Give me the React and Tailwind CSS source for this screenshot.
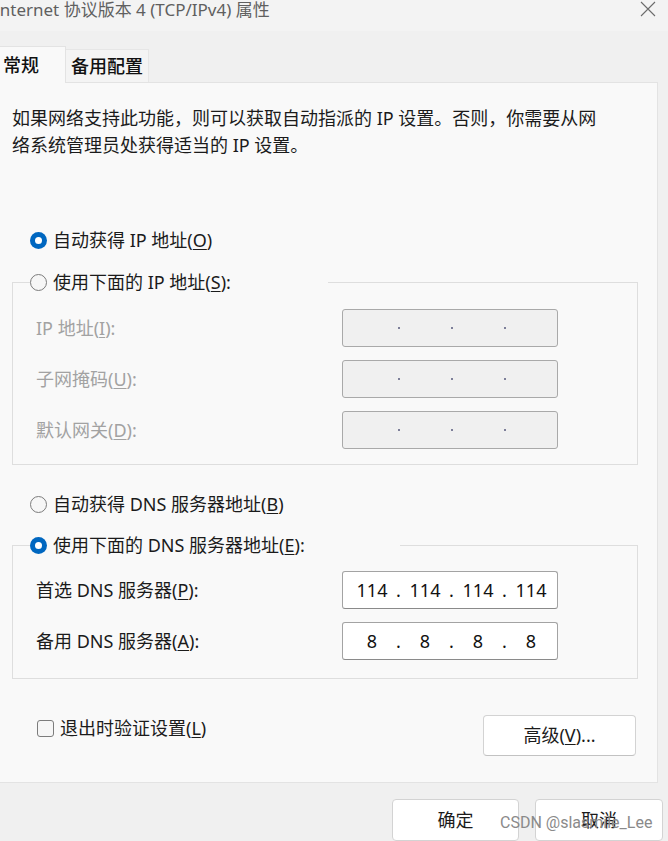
import React from 'react';

const font = "font-['Noto_Sans','Noto_Sans_CJK_SC',sans-serif]";

function Radio({ checked }) {
  if (checked) {
    return (
      <span className="flex h-[17px] w-[17px] shrink-0 items-center justify-center rounded-full bg-[#0067c0]">
        <span className="h-[7px] w-[7px] rounded-full bg-white" />
      </span>
    );
  }
  return <span className="h-[17px] w-[17px] shrink-0 rounded-full border border-[#7c7c7c] bg-[#f6f6f6]" />;
}

function RadioRow({ checked, children }) {
  return (
    <div className="flex h-6 items-center gap-[6px]">
      <Radio checked={checked} />
      <span className="text-[18px] leading-6 text-[#1b1b1b]">{children}</span>
    </div>
  );
}

function IpBox({ parts, disabled }) {
  return (
    <div
      className={
        disabled
          ? 'flex h-[38px] w-[216px] items-center rounded-[3px] border border-[#a9a9a9] bg-[#f0f0f0] pl-[9px]'
          : 'flex h-[38px] w-[216px] items-center rounded-[3px] border border-[#a3a3a3] border-b-[#8a8a8a] bg-white pl-[9px] text-[18px] text-[#111]'
      }
    >
      {parts.map((p, i) => (
        <React.Fragment key={i}>
          {i > 0 &&
            (disabled ? (
              <span className="flex w-[13px] justify-center">
                <span className="h-[2px] w-[2px] bg-[#7d7f99]" />
              </span>
            ) : (
              <span className="w-[13px] text-center">.</span>
            ))}
          <span className="w-10 text-center">{p}</span>
        </React.Fragment>
      ))}
    </div>
  );
}

function FieldRow({ label, parts, disabled }) {
  return (
    <div className="flex h-[38px] items-center pl-[23px]">
      <span className={`w-[306px] text-[18px] ${disabled ? 'text-[#a2a2a2]' : 'text-[#1b1b1b]'}`}>{label}</span>
      <IpBox parts={parts} disabled={disabled} />
    </div>
  );
}

export default function App() {
  return (
    <div className={`relative h-[841px] w-[668px] overflow-hidden bg-[#f0f0f0] ${font}`}>
      {/* title bar */}
      <div className="flex h-[31px] items-start justify-between bg-[#f3f3f3]">
        <span className="-ml-[6px] text-[17px] leading-[20px] text-[#5f5f5f]">Internet 协议版本 4 (TCP/IPv4) 属性</span>
        <svg className="mr-[12px] mt-[1px]" width="16" height="16" viewBox="0 0 16 16">
          <path d="M1 1 L15 15 M15 1 L1 15" stroke="#6b6b6b" strokeWidth="1.1" fill="none" />
        </svg>
      </div>

      {/* tabs */}
      <div className="mt-[15px] flex items-end">
        <div className="relative z-10 -mb-px flex h-[37px] w-[66px] items-center border-r border-t border-[#e3e3e3] bg-[#f9f9f9] pl-[3px]">
          <span className="text-[18px] font-medium text-[#111]">常规</span>
        </div>
        <div className="flex h-[33px] w-[83px] items-center justify-center border-r border-t border-[#e6e6e6] bg-[#f4f4f4]">
          <span className="text-[18px] font-medium text-[#111]">备用配置</span>
        </div>
      </div>

      {/* panel */}
      <div className="w-[658px] border-y border-r border-[#e3e3e3] bg-[#f9f9f9] pt-[22px]">
        <p className="pl-[12px] text-[18px] leading-[27px] text-[#1b1b1b]">
          如果网络支持此功能，则可以获取自动指派的 IP 设置。否则，你需要从网
          <br />
          络系统管理员处获得适当的 IP 设置。
        </p>

        <div className="mt-[69px] pl-[30px]">
          <RadioRow checked>
            自动获得 IP 地址(<u className="underline-offset-2">O</u>)
          </RadioRow>
        </div>

        <fieldset className="ml-[12px] mt-[18px] w-[626px] border border-[#dedede] pb-[15px]">
          <legend className="ml-[17px] w-[298px]">
            <RadioRow>
              使用下面的 IP 地址(<u className="underline-offset-2">S</u>):
            </RadioRow>
          </legend>
          <div className="mt-[15px] flex flex-col gap-[13px]">
            <FieldRow disabled parts={['', '', '', '']} label={<>IP 地址(<u className="underline-offset-2">I</u>):</>} />
            <FieldRow disabled parts={['', '', '', '']} label={<>子网掩码(<u className="underline-offset-2">U</u>):</>} />
            <FieldRow disabled parts={['', '', '', '']} label={<>默认网关(<u className="underline-offset-2">D</u>):</>} />
          </div>
        </fieldset>

        <div className="mt-[27px] pl-[30px]">
          <RadioRow>
            自动获得 DNS 服务器地址(<u className="underline-offset-2">B</u>)
          </RadioRow>
        </div>

        <fieldset className="ml-[12px] mt-[17px] w-[626px] border border-[#dedede] pb-[18px]">
          <legend className="ml-[17px] w-[370px]">
            <RadioRow checked>
              使用下面的 DNS 服务器地址(<u className="underline-offset-2">E</u>):
            </RadioRow>
          </legend>
          <div className="mt-[14px] flex flex-col gap-[13px]">
            <FieldRow parts={['114', '114', '114', '114']} label={<>首选 DNS 服务器(<u className="underline-offset-2">P</u>):</>} />
            <FieldRow parts={['8', '8', '8', '8']} label={<>备用 DNS 服务器(<u className="underline-offset-2">A</u>):</>} />
          </div>
        </fieldset>

        <div className="mt-[36px] flex items-start justify-between pb-[26px] pl-[37px] pr-[21px]">
          <div className="mt-[1px] flex h-6 items-center gap-[6px]">
            <span className="h-[17px] w-[17px] rounded-[3px] border border-[#7c7c7c] bg-[#f6f6f6]" />
            <span className="text-[18px] text-[#1b1b1b]">
              退出时验证设置(<u className="underline-offset-2">L</u>)
            </span>
          </div>
          <button className="h-[41px] w-[153px] rounded-[4px] border border-[#d3d3d3] border-b-[#c2c2c2] bg-white text-[18px] text-[#1b1b1b]">
            高级(<u className="underline-offset-2">V</u>)...
          </button>
        </div>
      </div>

      {/* dialog buttons */}
      <div className="mt-[16px] flex gap-[16px] pl-[392px]">
        <button className="h-[42px] w-[127px] rounded-[4px] border border-[#d3d3d3] bg-white text-[18px] text-[#1b1b1b]">确定</button>
        <button className="h-[42px] w-[128px] rounded-[4px] border border-[#d3d3d3] bg-white text-[18px] text-[#1b1b1b]">取消</button>
      </div>

      {/* watermark */}
      <span className="absolute left-[500px] top-[811px] font-['Roboto',sans-serif] text-[16px] leading-6 text-[#8a8a8a]">
        CSDN @slasmile_Lee
      </span>
    </div>
  );
}
